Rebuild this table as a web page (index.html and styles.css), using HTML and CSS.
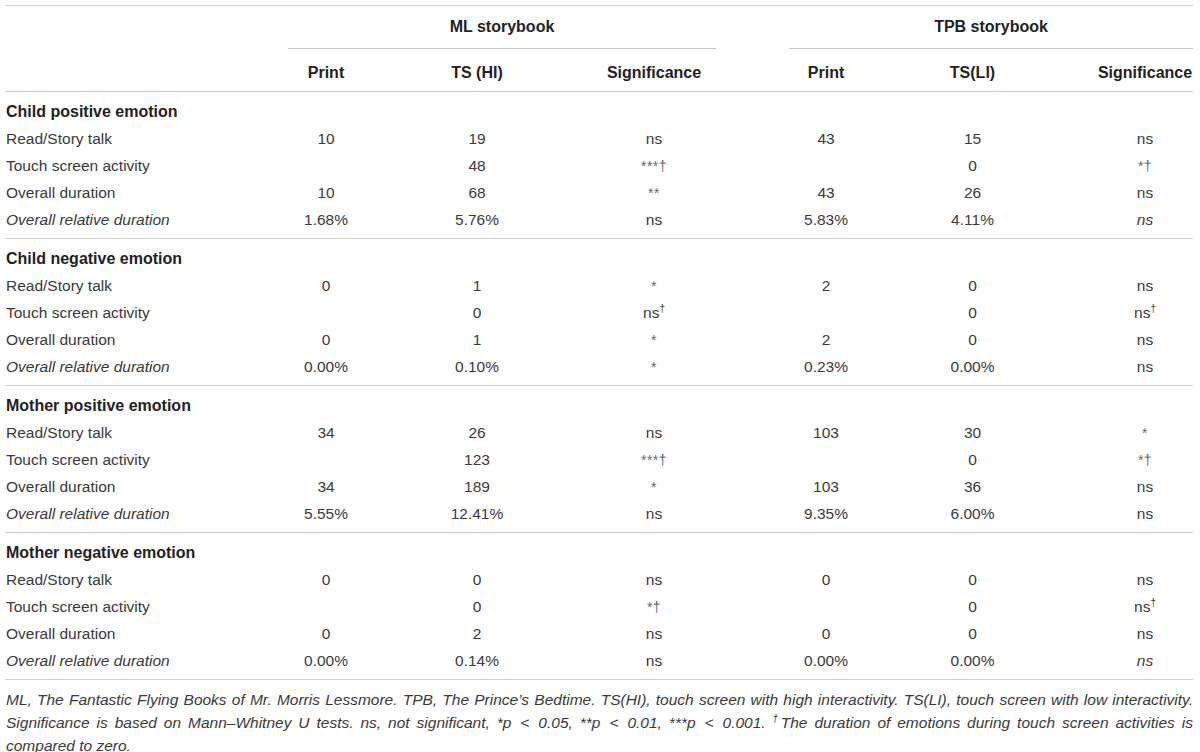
FILE: index.html
```html
<!DOCTYPE html>
<html lang="en">
<head>
    <meta charset="UTF-8">
    <title>Emotion durations by storybook format</title>
    <link rel="stylesheet" href="styles.css">
</head>
<body>
    <div class="wrap">
        <table class="results">
            <colgroup>
                <col class="c-label">
                <col class="c-ml-print">
                <col class="c-ml-ts">
                <col class="c-ml-sig">
                <col class="c-gap">
                <col class="c-tpb-print">
                <col class="c-tpb-ts">
                <col class="c-tpb-sig">
            </colgroup>
            <thead>
                <tr class="group-row">
                    <th></th>
                    <th colspan="3"><div class="group ml">ML storybook</div></th>
                    <th colspan="4"><div class="group tpb">TPB storybook</div></th>
                </tr>
                <tr class="col-row">
                    <th></th>
                    <th>Print</th>
                    <th>TS (HI)</th>
                    <th>Significance</th>
                    <th></th>
                    <th>Print</th>
                    <th>TS(LI)</th>
                    <th>Significance</th>
                </tr>
            </thead>

            <!-- Child positive -->
            <tbody>
                <tr class="title"><td colspan="8">Child positive emotion</td></tr>
                <tr><td>Read/Story talk</td><td>10</td><td>19</td><td>ns</td><td></td><td>43</td><td>15</td><td>ns</td></tr>
                <tr><td>Touch screen activity</td><td></td><td>48</td><td><span class="mark">***†</span></td><td></td><td></td><td>0</td><td><span class="mark">*†</span></td></tr>
                <tr><td>Overall duration</td><td>10</td><td>68</td><td><span class="mark">**</span></td><td></td><td>43</td><td>26</td><td>ns</td></tr>
                <tr class="last"><td><em>Overall relative duration</em></td><td>1.68%</td><td>5.76%</td><td>ns</td><td></td><td>5.83%</td><td>4.11%</td><td><em>ns</em></td></tr>
            </tbody>

            <!-- Child negative -->
            <tbody>
                <tr class="title"><td colspan="8">Child negative emotion</td></tr>
                <tr><td>Read/Story talk</td><td>0</td><td>1</td><td><span class="mark">*</span></td><td></td><td>2</td><td>0</td><td>ns</td></tr>
                <tr><td>Touch screen activity</td><td></td><td>0</td><td>ns<sup>†</sup></td><td></td><td></td><td>0</td><td>ns<sup>†</sup></td></tr>
                <tr><td>Overall duration</td><td>0</td><td>1</td><td><span class="mark">*</span></td><td></td><td>2</td><td>0</td><td>ns</td></tr>
                <tr class="last"><td><em>Overall relative duration</em></td><td>0.00%</td><td>0.10%</td><td><span class="mark">*</span></td><td></td><td>0.23%</td><td>0.00%</td><td>ns</td></tr>
            </tbody>

            <!-- Mother positive -->
            <tbody>
                <tr class="title"><td colspan="8">Mother positive emotion</td></tr>
                <tr><td>Read/Story talk</td><td>34</td><td>26</td><td>ns</td><td></td><td>103</td><td>30</td><td><span class="mark">*</span></td></tr>
                <tr><td>Touch screen activity</td><td></td><td>123</td><td><span class="mark">***†</span></td><td></td><td></td><td>0</td><td><span class="mark">*†</span></td></tr>
                <tr><td>Overall duration</td><td>34</td><td>189</td><td><span class="mark">*</span></td><td></td><td>103</td><td>36</td><td>ns</td></tr>
                <tr class="last"><td><em>Overall relative duration</em></td><td>5.55%</td><td>12.41%</td><td>ns</td><td></td><td>9.35%</td><td>6.00%</td><td>ns</td></tr>
            </tbody>

            <!-- Mother negative -->
            <tbody>
                <tr class="title"><td colspan="8">Mother negative emotion</td></tr>
                <tr><td>Read/Story talk</td><td>0</td><td>0</td><td>ns</td><td></td><td>0</td><td>0</td><td>ns</td></tr>
                <tr><td>Touch screen activity</td><td></td><td>0</td><td><span class="mark">*†</span></td><td></td><td></td><td>0</td><td>ns<sup>†</sup></td></tr>
                <tr><td>Overall duration</td><td>0</td><td>2</td><td>ns</td><td></td><td>0</td><td>0</td><td>ns</td></tr>
                <tr class="last"><td><em>Overall relative duration</em></td><td>0.00%</td><td>0.14%</td><td>ns</td><td></td><td>0.00%</td><td>0.00%</td><td><em>ns</em></td></tr>
            </tbody>
        </table>

        <p class="note">
            <span class="line">ML, The Fantastic Flying Books of Mr. Morris Lessmore. TPB, The Prince’s Bedtime. TS(HI), touch screen with high interactivity. TS(LI), touch screen with low interactivity.</span>
            <span class="line">Significance is based on Mann–Whitney U tests. ns, not significant, *p <span class="lt">&lt;</span> 0.05, **p <span class="lt">&lt;</span> 0.01, ***p <span class="lt">&lt;</span> 0.001. <sup>†</sup>The duration of emotions during touch screen activities is</span>
            compared to zero.
        </p>
    </div>
</body>
</html>
```

FILE: styles.css
```css
body {
    margin: 0;
    background: #ffffff;
    color: #3a3a3a;
    font-family: "Liberation Sans", Arial, sans-serif;
    font-size: 15.5px;
}
.wrap {
    padding: 5px 7px 0 5px;
}
.results {
    width: 1188px;
    table-layout: fixed;
    border-collapse: collapse;
    border-top: 1px solid #cfcfcf;
}

/* column widths, set so each column centre matches the print layout */
.c-label { width: 247px; }
.c-ml-print { width: 148px; }
.c-ml-ts { width: 154px; }
.c-ml-sig { width: 200px; }
.c-gap { width: 50px; }
.c-tpb-print { width: 44px; }
.c-tpb-ts { width: 249px; }
.c-tpb-sig { width: 96px; }

th, td {
    padding: 0;
    text-align: center;
    white-space: nowrap;
}
th {
    font-weight: bold;
    font-size: 16px;
    color: #222222;
}
.group-row th {
    height: 42px;
    vertical-align: bottom;
}
.group {
    height: 42px;
    line-height: 42px;
    border-bottom: 1px solid #c4c4c4;
}
.group.ml {
    margin-left: 36px;
    margin-right: 38px;
}
.group.tpb {
    margin-left: 35px;
}
.col-row th {
    height: 42px;
    padding-top: 6px;
    box-sizing: border-box;
    border-bottom: 1px solid #cfcfcf;
}
tbody {
    border-bottom: 1px solid #cfcfcf;
}
tbody td {
    height: 27px;
    line-height: 27px;
}
td:first-child {
    text-align: left;
    padding-left: 1px;
}
.title td {
    height: 26px;
    line-height: 26px;
    font-weight: bold;
    font-size: 16px;
    color: #222222;
    padding-top: 7px;
}
.last td {
    padding-bottom: 5px;
}
.mark {
    font-size: 14px;
    line-height: 1;
    color: #666666;
    letter-spacing: 0.5px;
}
sup {
    font-size: 10px;
    line-height: 0;
    vertical-align: 6px;
}
.note {
    margin: 8px 0 0 1px;
    font-style: italic;
    line-height: 23px;
    color: #3a3a3a;
}
.note .line {
    display: block;
    text-align: justify;
    text-align-last: justify;
}
.lt {
    margin: 0 2px;
}
```
